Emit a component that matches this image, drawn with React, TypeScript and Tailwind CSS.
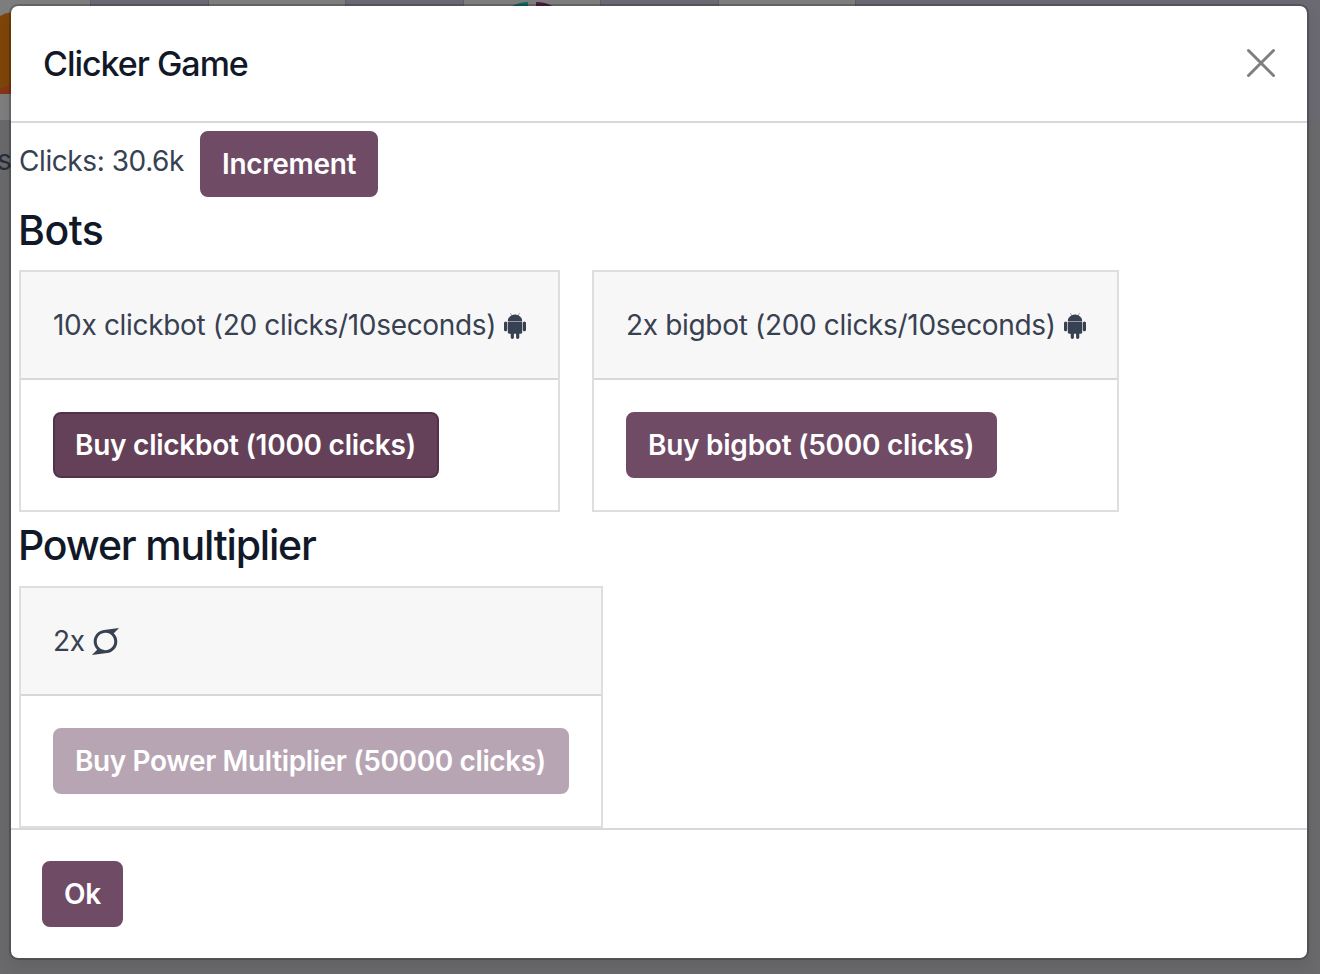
import type { ReactNode } from "react";
import { FaSuperpowers } from "react-icons/fa";

function AndroidIcon() {
  return (
    <svg viewBox="0 0 1408 1664" className="relative top-px ml-[8px] h-[26px] w-[22px] shrink-0 fill-[#374151]">
      <path
        transform="translate(0 1408) scale(1 -1)"
        d="M493 1053q16 0 27.5 -11.5t11.5 -27.5t-11.5 -27.5t-27.5 -11.5t-27 11.5t-11 27.5t11 27.5t27 11.5zM915 1053q16 0 27 -11.5t11 -27.5t-11 -27.5t-27 -11.5t-27.5 11.5t-11.5 27.5t11.5 27.5t27.5 11.5zM103 869q42 0 72 -30t30 -72v-430q0 -43 -29.5 -73t-72.5 -30t-73 30t-30 73v430q0 42 30 72t73 30zM1163 850v-666q0 -46 -32 -78t-77 -32h-75v-227q0 -43 -30 -73t-73 -30t-73 30t-30 73v227h-138v-227q0 -43 -30 -73t-73 -30q-42 0 -72 30t-30 73l-1 227h-74q-46 0 -78 32t-32 78v666h918zM931 1255q107 -55 171 -153.5t64 -215.5h-925q0 117 64 215.5t172 153.5l-71 131q-7 13 5 20q13 6 20 -6l72 -132q95 42 201 42t201 -42l72 132q7 12 20 6q12 -7 5 -20zM1408 767v-430q0 -43 -30 -73t-73 -30q-42 0 -72 30t-30 73v430q0 43 30 72.5t72 29.5q43 0 73 -29.5t30 -72.5z"
      />
    </svg>
  );
}

function Button({ className, children }: { className: string; children: ReactNode }) {
  return (
    <button
      className={
        "flex h-[66px] shrink-0 items-center rounded-[8px] border-2 pl-[20px] text-[28px] leading-[42px] font-semibold whitespace-nowrap text-white " +
        className
      }
    >
      {children}
    </button>
  );
}

function Card({ className, header, children }: { className: string; header: ReactNode; children: ReactNode }) {
  return (
    <section className={"h-[242px] border-2 border-[#dedede] bg-white " + className}>
      <header className="flex h-[108px] items-center border-b-2 border-[#d8d8d8] bg-[#f7f7f7] pl-[32px] whitespace-nowrap">
        {header}
      </header>
      <div className="px-[32px] pt-[32px]">{children}</div>
    </section>
  );
}

function Backdrop() {
  return (
    <div className="absolute inset-0 overflow-hidden bg-[#6a6a6d]">
      <div className="flex h-[120px] bg-[#6b6971]">
        <div className="w-[90px] bg-[#7e7e7e]" />
        <div className="w-[119px] border-x border-[#606064]" />
        <div className="w-[136px] bg-[#7e7e7e]" />
        <div className="w-[119px] border-x border-[#606064]" />
        <div className="w-[136px] bg-[#7e7e7e]" />
        <div className="w-[119px] border-x border-[#606064]" />
        <div className="w-[136px] bg-[#7e7e7e]" />
        <div className="w-[465px] border-l border-[#606064]" />
      </div>
      <svg className="absolute top-0 left-0 h-[120px] w-[600px]">
        <path d="M0 16Q5 13 12 12V94H0Z" fill="#7f4509" />
        <path d="M0 89Q6 87 12 83V94H0Z" fill="#873516" />
        <path d="M512 6Q520 2 528 2V6Z" fill="#126a62" />
        <path d="M536 2Q546 2 552 6H536Z" fill="#4e1d42" />
      </svg>
      <span className="absolute top-[139px] left-[-3px] text-[28px] leading-[42px] text-[#292d37]">s</span>
    </div>
  );
}

export default function App() {
  return (
    <div className="relative h-[974px] w-[1320px] overflow-hidden pt-[4px] pl-[9px] font-['Inter',sans-serif] text-[28px] leading-[42px] tracking-[-0.33px] text-[#374151]">
      <Backdrop />
      <main className="relative flex h-[956px] w-[1300px] flex-col rounded-[9px] border-2 border-black/20 bg-white bg-clip-padding shadow-[0_8px_16px_rgba(0,0,0,0.08)]">
        <header className="flex h-[117px] shrink-0 items-center justify-between border-b-2 border-[#d8d8dd] pr-[31px] pb-px pl-[32px]">
          <h1 className="relative top-px text-[34px] font-medium tracking-[-1.02px] text-[#111827]">Clicker Game</h1>
          <button aria-label="Close">
            <svg viewBox="0 0 30 30" className="h-[30px] w-[30px]" fill="none" stroke="#7f7f7f" strokeWidth="3" strokeLinecap="round">
              <path d="M2.5 2.5 27.5 27.5M27.5 2.5 2.5 27.5" />
            </svg>
          </button>
        </header>
        <div className="h-[705px] shrink-0 pt-[8px] pl-[8px]">
          <div className="flex">
            <span className="w-[181px] pt-[9px] tracking-[-0.42px] whitespace-nowrap">Clicks: 30.6k</span>
            <Button className="w-[178px] border-[#704b66] bg-[#704b66]">Increment</Button>
          </div>
          <h2 className="-ml-px mt-[8px] mb-[14px] h-[51px] text-[41px] leading-[51px] font-medium tracking-[-0.5px] text-[#111827]">Bots</h2>
          <div className="flex gap-[32px]">
            <Card className="w-[541px]" header={<><span>10x clickbot (20 clicks/10seconds)</span><AndroidIcon /></>}>
              <Button className="w-[386px] border-[#523149] bg-[#644158] tracking-[-0.26px]">Buy clickbot (1000 clicks)</Button>
            </Card>
            <Card className="w-[527px]" header={<><span>2x bigbot (200 clicks/10seconds)</span><AndroidIcon /></>}>
              <Button className="w-[371px] border-[#704b66] bg-[#704b66] tracking-[-0.26px]">Buy bigbot (5000 clicks)</Button>
            </Card>
          </div>
          <h2 className="-ml-px mt-[8px] mb-[15px] h-[51px] text-[41px] leading-[51px] font-medium tracking-[-1.18px] text-[#111827]">Power multiplier</h2>
          <Card className="w-[584px]" header={<><span>2x</span><FaSuperpowers className="ml-[5px] h-[31px] w-[31px]" /></>}>
            <Button className="w-[516px] border-[#b8a5b3] bg-[#b8a5b3] tracking-[-0.38px]">Buy Power Multiplier (50000 clicks)</Button>
          </Card>
        </div>
        <footer className="grow border-t-2 border-[#d8d8dd] pt-[31px] pl-[31px]">
          <Button className="w-[81px] border-[#704b66] bg-[#704b66]">Ok</Button>
        </footer>
      </main>
    </div>
  );
}
